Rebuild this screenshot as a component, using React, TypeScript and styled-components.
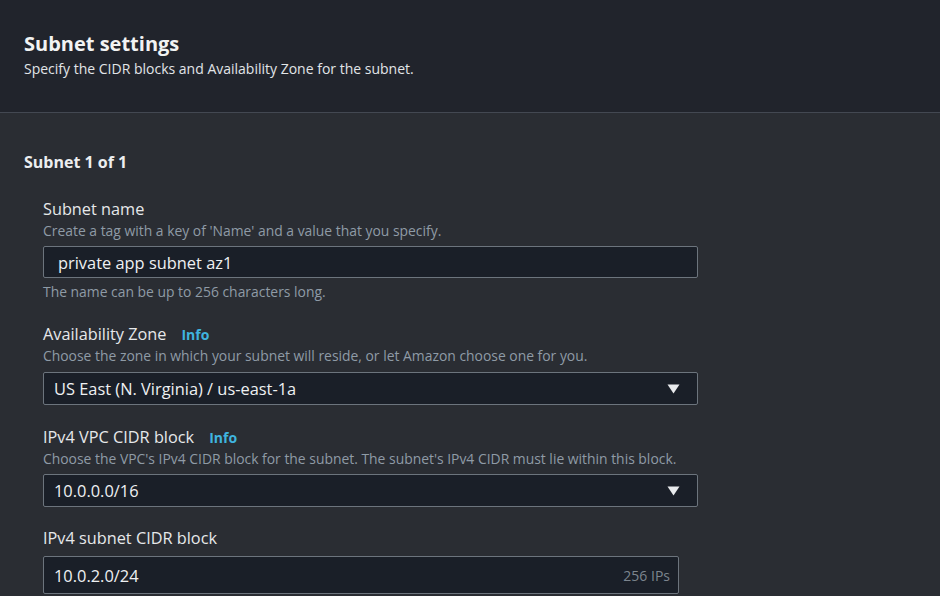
import React from "react";
import styled, { createGlobalStyle } from "styled-components";

const Global = createGlobalStyle`
  html, body { margin: 0; padding: 0; background: #2a2d33; }
  body { font-family: "Open Sans", "Noto Sans", Arial, sans-serif; -webkit-font-smoothing: antialiased; }
  * { box-sizing: border-box; }
`;

const Page = styled.div`
  width: 940px;
  height: 596px;
  overflow: hidden;
  background: #2a2d33;
  display: flex;
  flex-direction: column;
`;

const Header = styled.header`
  height: 113px;
  background: #21242c;
  border-bottom: 1px solid #434852;
  padding: 31px 24px 0;
  display: flex;
  flex-direction: column;
`;

const Title = styled.h2`
  margin: 0;
  font-size: 20px;
  line-height: 26px;
  font-weight: 700;
  color: #f2f3f3;
`;

const Subtitle = styled.p`
  margin: 0;
  font-size: 14px;
  line-height: 24px;
  color: #e2e5e8;
`;

const Body = styled.section`
  padding: 38px 24px 0;
  display: flex;
  flex-direction: column;
`;

const SectionTitle = styled.h3`
  margin: 0;
  font-size: 16px;
  line-height: 22px;
  font-weight: 700;
  color: #eceef0;
`;

const Fields = styled.div`
  padding: 25px 0 0 19px;
  display: flex;
  flex-direction: column;
`;

const Field = styled.div<{ $mt: number }>`
  margin-top: ${(p) => p.$mt}px;
  display: flex;
  flex-direction: column;
`;

const LabelRow = styled.div`
  display: flex;
  align-items: baseline;
  gap: 15px;
  height: 22px;
`;

const Label = styled.label`
  font-size: 16.3px;
  line-height: 22px;
  color: #e6e8ea;
`;

const Info = styled.span`
  font-size: 14px;
  font-weight: 700;
  color: #3fb4df;
`;

const Description = styled.div`
  font-size: 13.9px;
  line-height: 18px;
  color: #8f9ba6;
  margin-top: 2px;
`;

const Control = styled.div<{ $width: number; $height: number; $pad: number; $mt: number }>`
  margin-top: ${(p) => p.$mt}px;
  width: ${(p) => p.$width}px;
  height: ${(p) => p.$height}px;
  background: #1a1f28;
  border: 1px solid #6c747d;
  border-radius: 2px;
  padding: 0 17px 0 ${(p) => p.$pad}px;
  display: flex;
  align-items: center;
  justify-content: space-between;
`;

const Value = styled.span`
  font-size: 16.4px;
  color: #eef0f2;
`;

const Suffix = styled.span`
  font-size: 14px;
  color: #7c858e;
  margin-right: -9px;
`;

const Helper = styled.div`
  font-size: 13.9px;
  line-height: 18px;
  color: #8f9ba6;
  margin-top: 5px;
`;

const Caret = () => (
  <svg width="13" height="10" viewBox="0 0 13 10">
    <path d="M0.5 0.5 H12.5 L6.5 9.5 Z" fill="#e9ebed" />
  </svg>
);

export default function App() {
  return (
    <Page>
      <Global />
      <Header>
        <Title>Subnet settings</Title>
        <Subtitle>Specify the CIDR blocks and Availability Zone for the subnet.</Subtitle>
      </Header>
      <Body>
        <SectionTitle>Subnet 1 of 1</SectionTitle>
        <Fields>
          <Field $mt={0}>
            <LabelRow>
              <Label>Subnet name</Label>
            </LabelRow>
            <Description>Create a tag with a key of 'Name' and a value that you specify.</Description>
            <Control $width={655} $height={32} $pad={14} $mt={6}>
              <Value>private app subnet az1</Value>
            </Control>
            <Helper>The name can be up to 256 characters long.</Helper>
          </Field>
          <Field $mt={22}>
            <LabelRow>
              <Label>Availability Zone</Label>
              <Info>Info</Info>
            </LabelRow>
            <Description>Choose the zone in which your subnet will reside, or let Amazon choose one for you.</Description>
            <Control $width={655} $height={33} $pad={10} $mt={7}>
              <Value>US East (N. Virginia) / us-east-1a</Value>
              <Caret />
            </Control>
          </Field>
          <Field $mt={21}>
            <LabelRow>
              <Label>IPv4 VPC CIDR block</Label>
              <Info>Info</Info>
            </LabelRow>
            <Description>Choose the VPC's IPv4 CIDR block for the subnet. The subnet's IPv4 CIDR must lie within this block.</Description>
            <Control $width={655} $height={33} $pad={10} $mt={6}>
              <Value>10.0.0.0/16</Value>
              <Caret />
            </Control>
          </Field>
          <Field $mt={20}>
            <LabelRow>
              <Label>IPv4 subnet CIDR block</Label>
            </LabelRow>
            <Control $width={636} $height={38} $pad={10} $mt={7}>
              <Value>10.0.2.0/24</Value>
              <Suffix>256 IPs</Suffix>
            </Control>
          </Field>
        </Fields>
      </Body>
    </Page>
  );
}
